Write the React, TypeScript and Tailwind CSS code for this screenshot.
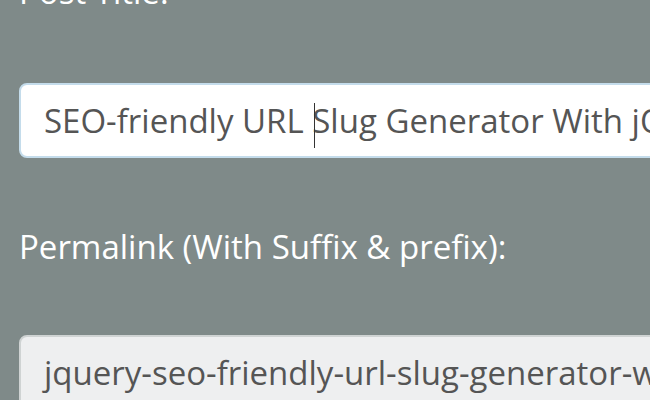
import { useState } from 'react';

function slugify(s: string) {
  return s
    .toLowerCase()
    .replace(/[^a-z0-9]+/g, '-')
    .replace(/^-+|-+$/g, '');
}

export default function App() {
  const [title] = useState('SEO-friendly URL Slug Generator With jQuery');
  // prefix + slug of the title
  const slug = 'jquery-' + slugify(title);

  return (
    <div
      className="h-[400px] w-[650px] overflow-hidden bg-[#7f8a89]"
      style={{ fontFamily: '"Open Sans", sans-serif' }}
    >
      <div className="-mt-[28px] pl-[19px]">
        <label className="block text-[33px] leading-[40px] text-white">Post Title:</label>
        <div className="mt-[71px] flex h-[75px] w-[700px] items-center rounded-[8px] border-[2px] border-[#c4dceb] bg-white pl-[23px]">
          <span className="whitespace-nowrap text-[33px] text-[#555]">
            SEO-friendly URL{' '}
            <span className="relative inline-block w-0">
              <span className="absolute left-[2px] -top-[30px] h-[45px] w-[1px] bg-[#333]" />
            </span>
            Slug Generator With jQuery
          </span>
        </div>
        <label className="mt-[69px] block text-[33px] leading-[40px] text-white">
          Permalink (With Suffix &amp; prefix):
        </label>
        <div className="mt-[68px] flex h-[75px] w-[700px] items-center rounded-[8px] border-[2px] border-[#cfd3d3] bg-[#eeeff0] pl-[23px]">
          <span className="whitespace-nowrap text-[33px] text-[#555]">{slug}</span>
        </div>
      </div>
    </div>
  );
}
